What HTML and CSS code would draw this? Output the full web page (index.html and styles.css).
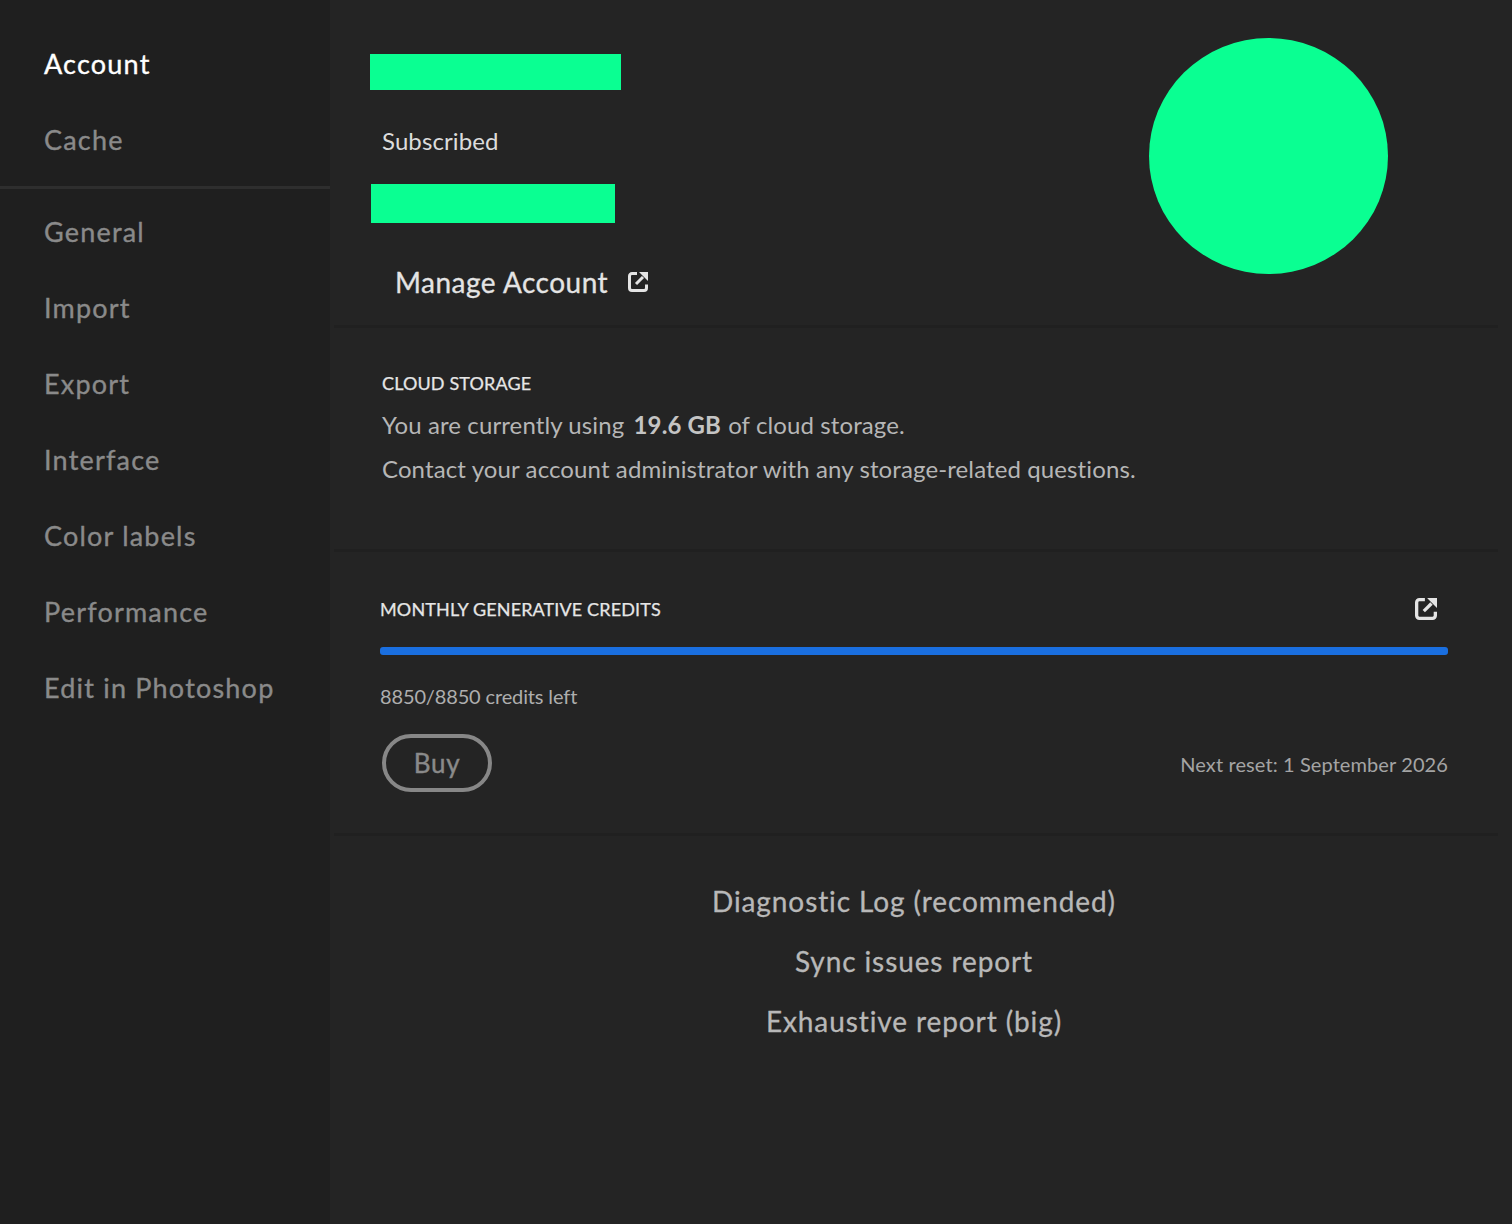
FILE: index.html
```html
<!DOCTYPE html>
<html lang="en">
<head>
<meta charset="utf-8">
<title>Preferences</title>
<link rel="stylesheet" href="styles.css">
</head>
<body>
<div class="app">
  <nav class="sidebar">
    <ul class="nav-group nav-top">
      <li class="nav-item active">Account</li>
      <li class="nav-item">Cache</li>
    </ul>
    <div class="nav-divider"></div>
    <ul class="nav-group">
      <li class="nav-item">General</li>
      <li class="nav-item">Import</li>
      <li class="nav-item">Export</li>
      <li class="nav-item">Interface</li>
      <li class="nav-item">Color labels</li>
      <li class="nav-item">Performance</li>
      <li class="nav-item">Edit in Photoshop</li>
    </ul>
  </nav>
  <main class="content">
    <section class="account">
      <div class="account-info">
        <div class="redact redact-name"></div>
        <div class="plan">Subscribed</div>
        <div class="redact redact-mail"></div>
        <a class="manage">Manage Account
          <svg class="ext ext-manage" viewBox="1 1 20 20"><path d="M10 2.500H5A2.500 2.500 0 0 0 2.500 5v12A2.500 2.500 0 0 0 5 19.500h12a2.500 2.500 0 0 0 2.500-2.500v-3.500" fill="none" stroke="currentColor" stroke-width="3"/><path d="M9 13 L16 6" fill="none" stroke="currentColor" stroke-width="3"/><path d="M12 1H21V10Z" fill="currentColor"/></svg>
        </a>
      </div>
      <div class="avatar"></div>
    </section>
    <section class="storage">
      <h2 class="caps">CLOUD STORAGE</h2>
      <p class="line">You are currently using <b class="strong">19.6 GB</b> of cloud storage.</p>
      <p class="line">Contact your account administrator with any storage-related questions.</p>
    </section>
    <section class="credits">
      <div class="credits-head">
        <h2 class="caps">MONTHLY GENERATIVE CREDITS</h2>
        <svg class="ext ext-credits" viewBox="1 1 20 20"><path d="M10 2.500H5A2.500 2.500 0 0 0 2.500 5v12A2.500 2.500 0 0 0 5 19.500h12a2.500 2.500 0 0 0 2.500-2.500v-3.500" fill="none" stroke="currentColor" stroke-width="3"/><path d="M9 13 L16 6" fill="none" stroke="currentColor" stroke-width="3"/><path d="M12 1H21V10Z" fill="currentColor"/></svg>
      </div>
      <div class="bar"></div>
      <div class="left">8850/8850 credits left</div>
      <div class="credits-foot">
        <button class="buy">Buy</button>
        <span class="reset">Next reset: 1 September 2026</span>
      </div>
    </section>
    <section class="reports">
      <a class="report">Diagnostic Log (recommended)</a>
      <a class="report">Sync issues report</a>
      <a class="report">Exhaustive report (big)</a>
    </section>
  </main>
</div>
</body>
</html>
```

FILE: styles.css
```css
* { box-sizing: border-box; }
html, body { margin: 0; padding: 0; height: 100%; background: #242424; }
body { font-family: "Lato", "Noto Sans", sans-serif; overflow: hidden; }
.app { display: flex; height: 1224px; width: 1512px; }

.sidebar { width: 330px; flex: none; background: #1f1f1f; padding-top: 25px; }
.nav-group { list-style: none; margin: 0; padding: 0; }
.nav-item { height: 76px; display: flex; align-items: center; padding-left: 44px; font-size: 27px; letter-spacing: 1.2px; color: #8a8a8a; -webkit-text-stroke: 0.35px currentColor; }
.nav-item.active { color: #fff; }
.nav-divider { height: 3px; background: #2e2e2e; margin: 9px 0 4px; }

.content { width: 1182px; flex: none; display: flex; flex-direction: column; }
.account, .storage, .credits { margin: 0 14px 0 4px; border-bottom: 3px solid #202020; }

.account { height: 328px; display: flex; justify-content: space-between; }
.account-info { padding: 54px 0 0 36px; }
.redact { background: #0aff92; }
.redact-name { width: 251px; height: 36px; }
.plan { margin: 37px 0 0 12px; height: 28px; line-height: 28px; font-size: 24px; letter-spacing: 0.1px; color: #dcdcdc; }
.redact-mail { width: 244px; height: 39px; margin: 29px 0 0 1px; }
.manage { display: flex; align-items: center; margin: 39px 0 0 25px; height: 40px; font-size: 28px; letter-spacing: 0.5px; color: #e4e4e4; -webkit-text-stroke: 0.3px currentColor; }
.ext { display: block; color: #e4e4e4; flex: none; }
.ext-manage { width: 20px; height: 20px; margin-left: 20px; }
.avatar { width: 239px; height: 236px; margin: 38px 110px 0 0; border-radius: 50%; background: #0aff92; }

.caps { margin: 0; font-size: 18px; line-height: 24px; font-weight: 400; letter-spacing: 0.13px; color: #e6e6e6; -webkit-text-stroke: 0.25px currentColor; }
.storage { height: 224px; padding: 43px 0 0 48px; }
.line { margin: 0; height: 44px; line-height: 44px; font-size: 24px; letter-spacing: 0.11px; color: #b6b6b6; }
.line:first-of-type { margin-top: 8px; }
.strong { font-weight: 700; margin: 0 1px 0 3px; color: #c4c4c4; }

.credits { height: 284px; padding: 45px 50px 0 46px; }
.credits-head { display: flex; justify-content: space-between; align-items: center; height: 24px; }
.ext-credits { width: 22px; height: 22px; margin-right: 11px; }
.bar { height: 8px; margin-top: 26px; border-radius: 3px; background: #1a6fe0; }
.left { margin-top: 27px; height: 28px; line-height: 28px; font-size: 20px; letter-spacing: -0.14px; color: #aeaeae; }
.credits-foot { display: flex; justify-content: space-between; align-items: center; margin: 24px 0 0 2px; }
.buy { width: 110px; height: 58px; border: 4px solid #878787; border-radius: 29px; background: transparent; font-family: inherit; font-size: 26px; letter-spacing: 0.7px; color: #8a8a8a; padding: 0; -webkit-text-stroke: 0.4px currentColor; }
.reset { font-size: 20px; letter-spacing: 0.1px; color: #a4a4a4; padding-top: 2px; }

.reports { display: flex; flex-direction: column; align-items: center; padding: 35px 0 0; width: 1168px; }
.report { height: 60px; line-height: 60px; font-size: 28px; letter-spacing: 0.9px; color: #b8b8b8; -webkit-text-stroke: 0.3px currentColor; }
```
